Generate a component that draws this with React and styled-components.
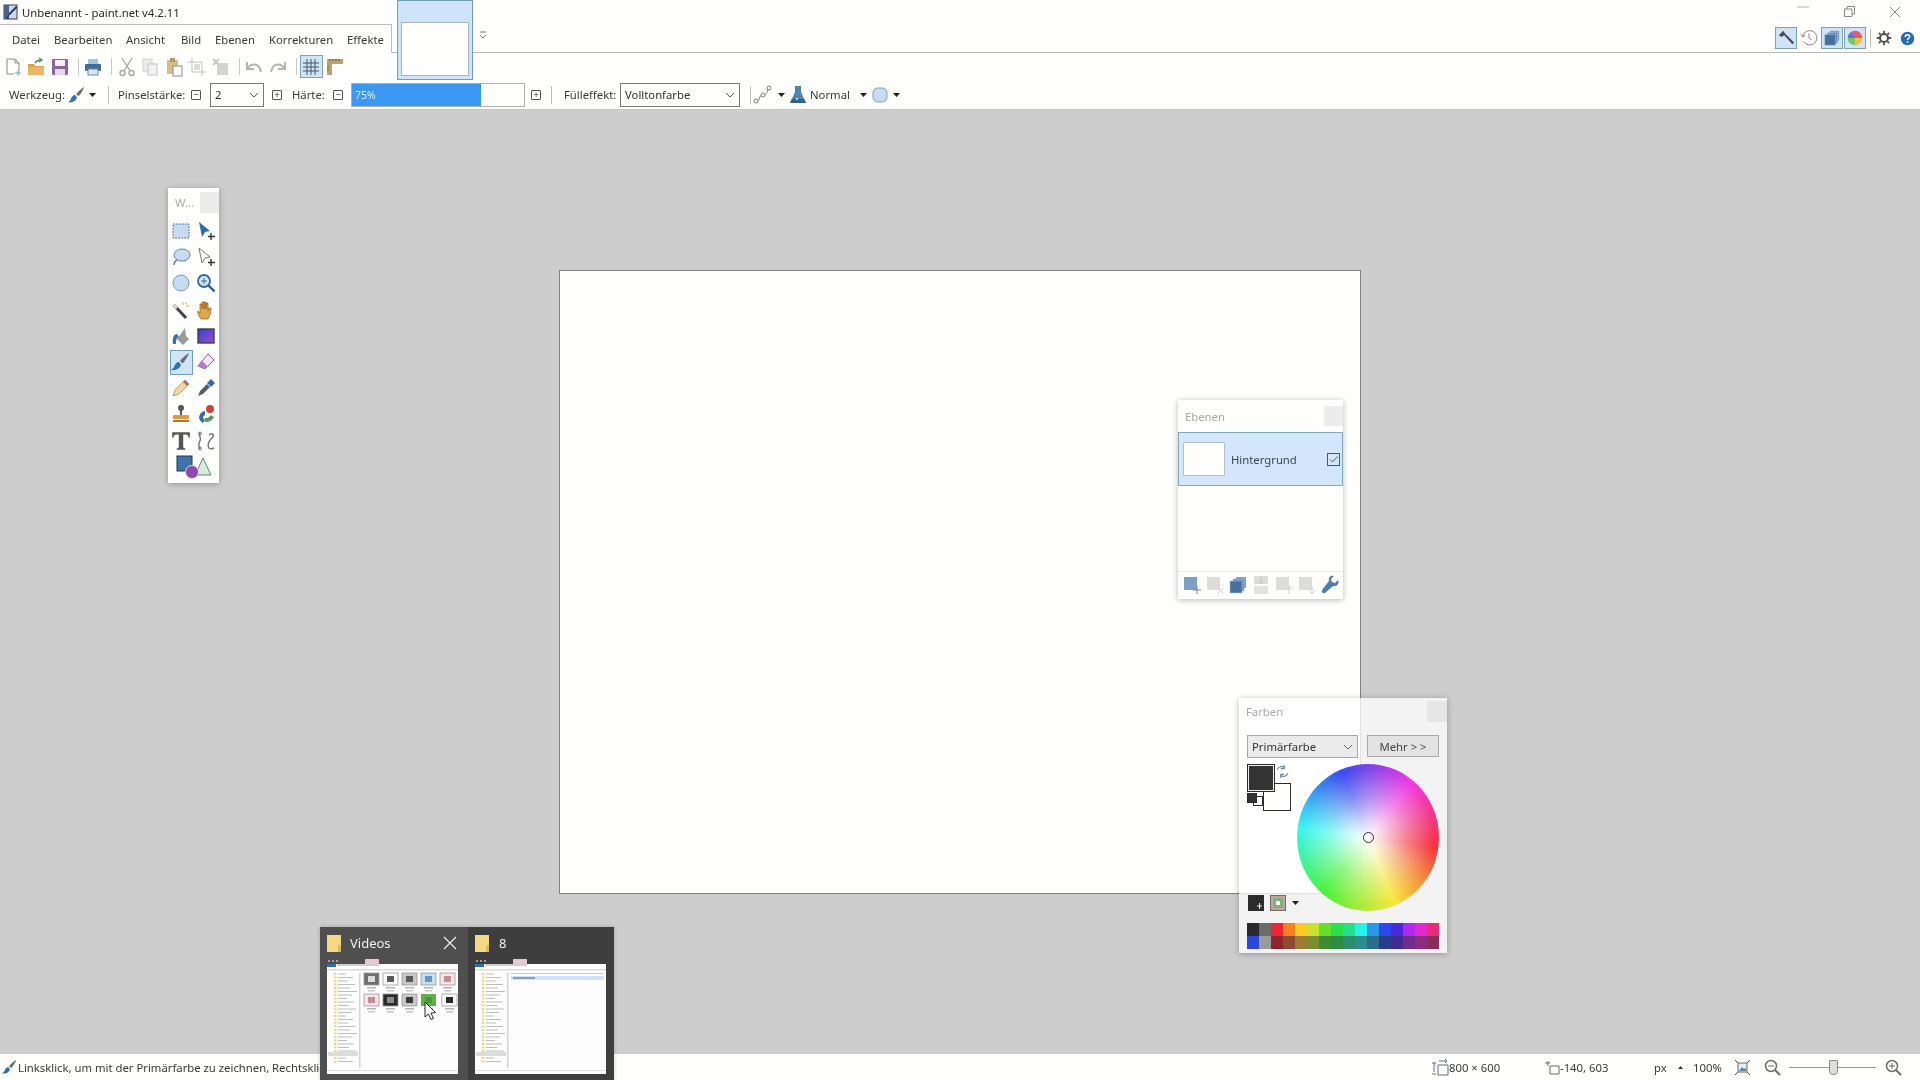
import React from "react";
import styled, { createGlobalStyle } from "styled-components";

const GlobalStyle = createGlobalStyle`
  html, body { margin: 0; padding: 0; background: #cdcdcd; }
  body { font-family: "Noto Sans", "Open Sans", sans-serif; font-size: 11.3px; color: #333; }
`;

const Screen = styled.div`
  position: relative;
  width: 1920px;
  height: 1080px;
  display: flex;
  flex-direction: column;
  overflow: hidden;
  filter: blur(0.35px);
`;

const Chrome = styled.header`
  position: relative;
  background: #fefefc;
  border-bottom: 1px solid #c4c4c4;
`;

const TitleBar = styled.div`
  height: 24px;
  display: flex;
  align-items: center;
  padding-left: 3px;
  gap: 3px;
  color: #2b2b2b;
`;

const WinButtons = styled.div`
  margin-left: auto;
  padding-right: 2px;
  display: flex;
  color: #9a9a9a;
`;

const WinButton = styled.span`
  width: 46px;
  display: flex;
  justify-content: center;
`;

const MenuRow = styled.div`
  height: 28px;
  display: flex;
  align-items: stretch;
  border-bottom: 1px solid #b9b9b6;
`;

const MenuTabs = styled.nav`
  width: 392px;
  box-sizing: border-box;
  margin-bottom: -1px;
  padding-left: 12px;
  display: flex;
  align-items: center;
  border-top: 1px solid #bdbdbd;
  border-right: 1px solid #bdbdbd;
  background: #fefefc;
`;

const MenuItem = styled.span`
  width: ${(p) => p.$w}px;
  color: #3a3a3a;
  white-space: nowrap;
`;

const Expander = styled.span`
  margin: 7px 0 0 86px;
`;

const RightTools = styled.div`
  margin-left: auto;
  margin-right: 2px;
  display: flex;
  align-items: center;
  gap: 1px;
`;

const PanelToggle = styled.span`
  width: 22px;
  height: 22px;
  display: flex;
  align-items: center;
  justify-content: center;
  box-sizing: border-box;
  border: 1px solid ${(p) => (p.$on ? "#7ba3b5" : "transparent")};
  background: ${(p) => (p.$on ? "#cfe4f7" : "transparent")};
`;

const DocThumb = styled.div`
  position: absolute;
  left: 397px;
  top: 0;
  width: 76px;
  height: 80px;
  box-sizing: border-box;
  padding: 21px 3px 3px;
  background: #cfe4fa;
  border: 1px solid #6f9fb0;
  z-index: 2;
`;

const DocThumbPage = styled.div`
  height: 100%;
  background: #fefefc;
  border: 1px solid #a9b4bf;
  box-sizing: border-box;
`;

const ToolRow = styled.div`
  height: 27px;
  display: flex;
  align-items: center;
  padding-left: 1px;
`;

const ToolButton = styled.span`
  width: 23.5px;
  height: 23px;
  flex-shrink: 0;
  display: flex;
  align-items: center;
  justify-content: center;
  box-sizing: border-box;
  border: 1px solid ${(p) => (p.$on ? "#7ba3b5" : "transparent")};
  background: ${(p) => (p.$on ? "#cfe4f7" : "transparent")};
`;

const ToolSep = styled.span`
  width: 1px;
  height: 17px;
  margin: 0 3px 0 6px;
  background: #c9c9c9;
  flex-shrink: 0;
`;

const OptionsRow = styled.div`
  height: 29px;
  display: flex;
  align-items: center;
  padding-left: 9px;
`;

const Opt = styled.span`
  display: flex;
  align-items: center;
  flex-shrink: 0;
  margin-left: ${(p) => p.$ml || 0}px;
  white-space: nowrap;
  color: #3a3a3a;
`;

const OptLabel = styled(Opt)`
  width: ${(p) => p.$w}px;
`;

const OptSep = styled.span`
  width: 1px;
  height: 18px;
  flex-shrink: 0;
  background: #bdbdbd;
  margin: 0 ${(p) => p.$mr || 0}px 0 ${(p) => p.$ml}px;
`;

const Step = styled.span`
  width: 10px;
  height: 10px;
  flex-shrink: 0;
  box-sizing: border-box;
  border: 1px solid #555;
  border-radius: 1px;
  margin-left: ${(p) => p.$ml}px;
  display: flex;
  align-items: center;
  justify-content: center;
  font-size: 9px;
  line-height: 1;
  color: #333;
`;

const Select = styled.span`
  width: ${(p) => p.$w}px;
  height: 24px;
  flex-shrink: 0;
  margin-left: ${(p) => p.$ml}px;
  box-sizing: border-box;
  border: 1px solid #7a7a7a;
  padding: 0 4px;
  display: flex;
  align-items: center;
  justify-content: space-between;
  color: #333;
`;

const Slider = styled.span`
  width: 174px;
  height: 24px;
  margin-left: 8px;
  flex-shrink: 0;
  box-sizing: border-box;
  border: 1px solid #b0b0b0;
  display: flex;
  background: #fefefc;
`;

const SliderFill = styled.span`
  background: #3a98f2;
  color: #dcefff;
  display: flex;
  align-items: center;
  padding-left: 3px;
  box-sizing: border-box;
  font-size: 10.5px;
`;

const Workspace = styled.main`
  flex: 1;
  min-height: 0;
  position: relative;
  display: flex;
  align-items: center;
  justify-content: center;
  background: #cdcdcd;
`;

const Canvas = styled.div`
  width: 802px;
  height: 624px;
  box-sizing: border-box;
  background: #fefefc;
  border: 1px solid #808080;
`;

const Floating = styled.section`
  position: absolute;
  left: ${(p) => p.$x}px;
  top: ${(p) => p.$y}px;
  width: ${(p) => p.$w}px;
  height: ${(p) => p.$h}px;
  box-sizing: border-box;
  background: ${(p) => p.$bg || "#fefefc"};
  box-shadow: 0 1px 6px rgba(0, 0, 0, 0.28);
  display: flex;
  flex-direction: column;
`;

const FloatHead = styled.div`
  height: ${(p) => p.$h}px;
  flex-shrink: 0;
  display: flex;
  align-items: center;
  justify-content: space-between;
  padding-left: 7px;
  color: #a9a9a9;
`;

const FloatClose = styled.span`
  width: ${(p) => p.$w}px;
  height: ${(p) => p.$hh}px;
  background: ${(p) => p.$bg || "#ececec"};
`;

const ToolGrid = styled.div`
  display: grid;
  grid-template-columns: 25px 25px;
  grid-auto-rows: 26.2px;
  justify-content: center;
  padding-top: 2px;
  justify-items: center;
  align-items: center;
`;

const ToolCell = styled.span`
  width: 23px;
  height: 25px;
  display: flex;
  align-items: center;
  justify-content: center;
  box-sizing: border-box;
  border: 1px solid ${(p) => (p.$on ? "#6f9fb0" : "transparent")};
  background: ${(p) => (p.$on ? "#cfe4f7" : "transparent")};
`;

const ShapesCell = styled.span`
  grid-column: 1 / span 2;
  display: flex;
  justify-content: center;
  margin-top: 1px;
`;

const LayerRow = styled.div`
  height: 54px;
  box-sizing: border-box;
  display: flex;
  align-items: center;
  padding: 0 2px 0 4px;
  background: #d3e6fb;
  border: 1px solid #84a9bd;
  color: #3d4650;
`;

const LayerThumb = styled.span`
  width: 42px;
  height: 34px;
  box-sizing: border-box;
  background: #fefefc;
  border: 1px solid #b5bfc9;
  border-radius: 1px;
  margin-right: 6px;
`;

const LayerCheck = styled.span`
  width: 13px;
  height: 13px;
  margin-left: auto;
  box-sizing: border-box;
  border: 1px solid #555;
  display: flex;
  align-items: center;
  justify-content: center;
`;

const LayerSpace = styled.div`
  flex: 1;
  border-bottom: 1px solid #ececec;
`;

const LayerTools = styled.div`
  height: 26px;
  display: flex;
  align-items: center;
  justify-content: space-between;
  padding: 0 3px 1px 4px;
`;

const ColorTop = styled.div`
  display: flex;
  justify-content: space-between;
  padding: 10px 8px 0 8px;
`;

const ColorSelect = styled(Select)`
  height: 23px;
  border-color: #a8a8a8;
  background: rgba(228, 228, 228, 0.75);
  padding: 0 4px;
`;

const MoreButton = styled.span`
  width: 72px;
  height: 22px;
  box-sizing: border-box;
  border: 1px solid #a8a8a8;
  background: #e3e3e3;
  display: flex;
  align-items: center;
  justify-content: center;
  color: #444;
`;

const ColorMain = styled.div`
  position: relative;
  height: 143px;
  margin-top: 6px;
`;

const Swatch = styled.span`
  position: absolute;
  left: ${(p) => p.$x}px;
  top: ${(p) => p.$y}px;
  width: ${(p) => p.$s}px;
  height: ${(p) => p.$s}px;
  box-sizing: border-box;
  background: ${(p) => p.$c};
  border: 1px solid #2d2d2d;
  box-shadow: ${(p) => (p.$ring ? "inset 0 0 0 1px #eee" : "none")};
`;

const SwapIcon = styled.span`
  position: absolute;
  left: 37px;
  top: 1px;
`;

const Wheel = styled.div`
  position: absolute;
  left: 58px;
  top: 0;
  width: 142px;
  height: 147px;
  border-radius: 50%;
  opacity: 0.92;
  background:
    radial-gradient(closest-side, #fff 0%, rgba(255, 255, 255, 0.8) 20%, rgba(255, 255, 255, 0.38) 55%, rgba(255, 255, 255, 0) 94%),
    conic-gradient(from 98deg, #f5222d, #f9e72c 60deg, #3ff02c 120deg, #2cf5f0 180deg, #2c3cf0 240deg, #f02ce0 300deg, #f5222d);
`;

const WheelMark = styled.span`
  position: absolute;
  left: 50%;
  top: 50%;
  width: 9px;
  height: 9px;
  margin: -6px 0 0 -5px;
  border-radius: 50%;
  border: 1px solid #222;
`;

const ColorTools = styled.div`
  display: flex;
  align-items: center;
  padding-left: 9px;
  gap: 6px;
  margin-top: -14px;
  height: 20px;
  position: relative;
`;

const Palette = styled.div`
  display: grid;
  grid-template-columns: repeat(16, 12px);
  grid-auto-rows: 13px;
  margin: 10px 0 0 8px;
`;

const PaletteCell = styled.span`
  background: ${(p) => p.$c};
`;

const StatusBar = styled.footer`
  height: 26px;
  flex-shrink: 0;
  display: flex;
  align-items: center;
  background: #fefefc;
  padding-left: 2px;
  color: #3a3a3a;
`;

const StatusText = styled.span`
  display: flex;
  align-items: center;
  white-space: nowrap;
  width: 1429px;
  overflow: hidden;
`;

const StatusCell = styled.span`
  width: ${(p) => p.$w}px;
  flex-shrink: 0;
  display: flex;
  align-items: center;
  white-space: nowrap;
`;

const ZoomTrack = styled.span`
  position: relative;
  width: 87px;
  height: 1px;
  background: #9a9a9a;
  flex-shrink: 0;
  margin: 0 9px 0 8px;
`;

const ZoomThumb = styled.span`
  position: absolute;
  left: 40px;
  top: -7px;
  width: 9px;
  height: 15px;
  box-sizing: border-box;
  border: 1px solid #8a8a8a;
  border-radius: 1px 1px 4px 4px;
  background: #dedede;
`;

const TaskPreview = styled.aside`
  position: absolute;
  left: 320px;
  top: 927px;
  width: 294px;
  height: 153px;
  display: flex;
  background: #3e3e3e;
  box-shadow: 0 0 4px rgba(0, 0, 0, 0.2);
  z-index: 3;
`;

const TaskItem = styled.div`
  width: ${(p) => p.$w}px;
  box-sizing: border-box;
  padding: 0 8px 0 ${(p) => p.$pad}px;
  background: ${(p) => p.$bg};
  display: flex;
  flex-direction: column;
`;

const TaskHead = styled.div`
  height: 32px;
  display: flex;
  align-items: center;
  gap: 9px;
  color: #f2f2f2;
  font-size: 13px;
`;

const TaskLabel = styled.span`
  margin-left: ${(p) => p.$ml}px;
`;

const TaskClose = styled.span`
  margin-left: auto;
  margin-right: 3px;
  display: flex;
`;

const Svg = ({ s = 20, w, h, vb = "0 0 20 20", children }) => (
  <svg width={w || s} height={h || s} viewBox={vb} fill="none" style={{ display: "block", flexShrink: 0 }}>
    {children}
  </svg>
);

const Caret = () => (
  <Svg w={7} h={4} vb="0 0 7 4"><path d="M0 0h7L3.5 4z" fill="#222" /></Svg>
);

const Chevron = ({ c = "#555" }) => (
  <Svg w={10} h={6} vb="0 0 10 6"><path d="M1 1l4 4 4-4" stroke={c} strokeWidth="1" /></Svg>
);

const AppIcon = () => (
  <Svg s={16} vb="0 0 16 16">
    <rect x="1" y="1" width="13" height="14" fill="#cdd8e8" stroke="#2f3f63" />
    <path d="M1 1h5v14H1z" fill="#4b628c" />
    <path d="M4 13l2-4 7-7 1.500 1.500-7 7z" fill="#2a3f63" />
    <path d="M3 15l3-1-1-2z" fill="#23314d" />
  </Svg>
);

const BrushIcon = ({ s = 20 }) => (
  <Svg s={s}>
    <path d="M18 1c-2 1-7 5-9 8l2.500 2.500C14 9 17 4 18 1z" fill="#6c6c6c" />
    <path d="M8 10c-3 0-4 3-5 5-.6 1.200-1.500 2-3 3 4 .6 8-.5 10-5z" fill="#2f6fb4" />
  </Svg>
);

const NewIcon = () => (
  <Svg><path d="M4 2h8l4 4v8M4 2v15h7" stroke="#8a8a8a" /><path d="M12 2v4h4" stroke="#8a8a8a" /><path d="M15 13v6M12 16h6" stroke="#7d9aa6" /></Svg>
);
const OpenIcon = () => (
  <Svg><path d="M2 7h6l1 2h9v9H2z" fill="#dfa04a" /><path d="M2 10h16v8H2z" fill="#e8b768" /><path d="M9 6c2-3 4-3 6-3M13 1l3 2-3 2" stroke="#4d9b62" strokeWidth="1.400" /></Svg>
);
const SaveIcon = () => (
  <Svg><rect x="2" y="2" width="16" height="16" rx="1" fill="#8b659f" /><rect x="5" y="3" width="10" height="6" fill="#f5eff8" /><rect x="5" y="12" width="10" height="6" fill="#e3d9ea" /></Svg>
);
const PrintIcon = () => (
  <Svg><rect x="5" y="2" width="10" height="6" fill="#a7c4db" /><rect x="2" y="7" width="16" height="7" rx="1" fill="#3f6d94" /><rect x="5" y="12" width="10" height="6" fill="#dce6ee" stroke="#6c8aa3" /></Svg>
);
const CutIcon = () => (
  <Svg><path d="M5 1l8 13M15 1L7 14" stroke="#a9a9a9" strokeWidth="1.400" /><circle cx="5.500" cy="16" r="2.500" stroke="#a9a9a9" strokeWidth="1.400" /><circle cx="14.500" cy="16" r="2.500" stroke="#a9a9a9" strokeWidth="1.400" /></Svg>
);
const CopyIcon = () => (
  <Svg><rect x="3" y="2" width="9" height="12" fill="#ececec" stroke="#cfcfcf" /><rect x="8" y="7" width="9" height="11" fill="#f2f2f2" stroke="#c4c4c4" /></Svg>
);
const PasteIcon = () => (
  <Svg><rect x="3" y="3" width="11" height="14" rx="1" fill="#dcbc82" /><rect x="6" y="1" width="5" height="4" fill="#b39a6c" /><rect x="9" y="9" width="9" height="10" fill="#fbfbfb" stroke="#8d8d8d" /></Svg>
);
const CropIcon = () => (
  <Svg><path d="M5 1v14h14M1 5h14v14" stroke="#c0c0c0" /><rect x="7" y="7" width="6" height="6" fill="#dcdcdc" /></Svg>
);
const DeselectIcon = () => (
  <Svg><rect x="6" y="6" width="11" height="12" fill="#d3d3d3" /><path d="M2 2l6 6M8 2L2 8" stroke="#bdbdbd" strokeWidth="1.600" /></Svg>
);
const UndoIcon = ({ flip }) => (
  <Svg>
    <g transform={flip ? "matrix(-1 0 0 1 20 0)" : undefined}>
      <path d="M3 5v7h7M3 12c4-6 12-7 14 3" stroke="#b4b4b4" strokeWidth="2" />
    </g>
  </Svg>
);
const GridIcon = () => (
  <Svg><path d="M6 2v16M10 2v16M14 2v16M2 6h16M2 10h16M2 14h16" stroke="#43566a" /></Svg>
);
const RulerIcon = () => (
  <Svg><path d="M2 2h16v5H7v11H2z" fill="#bfa26a" /><path d="M5 2v2M8 2v2M11 2v2M14 2v2M2 10h2M2 13h2" stroke="#6b5a39" /></Svg>
);
const CurveIcon = () => (
  <Svg><path d="M3 16c5 0 2-6 7-6s4-5 6-7" stroke="#7f7f7f" /><circle cx="3" cy="16" r="2" fill="#fff" stroke="#7f7f7f" /><circle cx="10" cy="10" r="2" fill="#fff" stroke="#7f7f7f" /><circle cx="16" cy="3" r="2" fill="#fff" stroke="#7f7f7f" /></Svg>
);
const FlaskIcon = () => (
  <Svg><path d="M7 1h6v6l5 11H2L7 7z" fill="#4f86ad" /><path d="M4 14h12l2 4H2z" fill="#2f6488" /><circle cx="9" cy="14" r="1" fill="#e9f3fa" /></Svg>
);
const ShapeIcon = () => (
  <Svg><rect x="3" y="3" width="14" height="14" rx="5" fill="#c8dcf7" stroke="#7e9dc2" /></Svg>
);
const HammerIcon = () => (
  <Svg s={18}><path d="M7 2l-5 5 3 2 3-2 9 10 2-2L9 5z" fill="#4d4d4d" /></Svg>
);
const ClockIcon = () => (
  <Svg s={18}><path d="M3 8a8 8 0 1 1 1 6" stroke="#7b7b7b" /><path d="M1 6l2 3 3-2M10 5v5l3 2" stroke="#7b7b7b" /></Svg>
);
const LayersIcon = ({ s = 20 }) => (
  <Svg s={s}><rect x="8" y="2" width="10" height="11" fill="#7da0cc" /><rect x="5" y="4" width="11" height="12" fill="#5f88bc" stroke="#a8c2e0" strokeWidth=".6" /><rect x="2" y="6" width="12" height="12" fill="#46719f" stroke="#a8c2e0" strokeWidth=".6" /></Svg>
);
const ColorsIcon = () => (
  <Svg s={18}>
    <circle cx="10" cy="10" r="8" style={{ fill: "#c65fa5" }} />
    <path d="M10 10V2a8 8 0 0 1 8 8z" fill="#ea5e58" />
    <path d="M10 10h8a8 8 0 0 1-8 8z" fill="#f0c344" />
    <path d="M10 10v8a8 8 0 0 1-8-8z" fill="#72c95f" />
    <path d="M10 10H2a8 8 0 0 1 3-6z" fill="#5e72d8" />
  </Svg>
);
const GearIcon = () => (
  <Svg s={16}><circle cx="10" cy="10" r="5" stroke="#4f4f4f" strokeWidth="2.600" /><path d="M10 1v3M10 16v3M1 10h3M16 10h3M3.600 3.600l2 2M14.400 14.400l2 2M3.600 16.400l2-2M14.400 5.600l2-2" stroke="#4f4f4f" strokeWidth="2.200" /></Svg>
);
const HelpIcon = () => (
  <Svg s={15}><circle cx="10" cy="10" r="9" fill="#2a6aa8" /><path d="M7 8c0-4 6-4 6-.6 0 2-3 2-3 4.600" stroke="#fff" strokeWidth="2" /><rect x="9" y="13.600" width="2" height="2" fill="#fff" /></Svg>
);

/* tool window icons */
const T = {
  rect: <Svg><rect x="2" y="3" width="16" height="14" fill="#c5dcf3" stroke="#607d99" strokeDasharray="2 1" /></Svg>,
  move: <Svg><path d="M3 1l11 9-5 1-3 5z" fill="#2f6cab" /><path d="M15 12v7M12 15.500h7" stroke="#333" strokeWidth="1.400" /></Svg>,
  lasso: <Svg><ellipse cx="11" cy="8" rx="8" ry="6" fill="#c5dcf3" stroke="#6488a8" /><path d="M6 13c-2 1-3 3-3 5" stroke="#6488a8" strokeWidth="1.500" /></Svg>,
  moveSel: <Svg><path d="M3 1l11 9-5 1-3 5z" fill="#fff" stroke="#777" /><path d="M15 12v7M12 15.500h7" stroke="#333" strokeWidth="1.400" /></Svg>,
  ellipse: <Svg><circle cx="10" cy="10" r="8" fill="#c5dcf3" stroke="#7f9ab3" /></Svg>,
  zoom: <Svg><circle cx="8" cy="8" r="6" fill="#d3e4f5" stroke="#35689a" strokeWidth="1.800" /><path d="M12.500 12.500l6 6" stroke="#2d5a88" strokeWidth="2.400" /><path d="M8 5v6M5 8h6" stroke="#35689a" /></Svg>,
  wand: <Svg><path d="M3 5l12 13" stroke="#444" strokeWidth="3" /><path d="M3 5l3 3" stroke="#ddd" strokeWidth="3" /><path d="M12 2v3M15 6h3M14 3l2 1" stroke="#d8b25a" /></Svg>,
  hand: <Svg><path d="M5 19c-2-3-4-6-3-8l2 2V4h2v5V2h2v7V2h2v7V3h2v8l1-3h2c0 4-1 8-3 11z" fill="#e0a94f" stroke="#8d5f1e" strokeWidth=".7" /></Svg>,
  fill: <Svg><path d="M9 9l5-7 1 8 3 3-6 6-6-6z" fill="#9a9a9a" /><path d="M6 8C3 8 1 12 2 18h3c0-3 0-6 3-7z" fill="#3b70a8" /></Svg>,
  gradient: <Svg><defs><linearGradient id="gr" x1="0" y1="0" x2="1" y2="1"><stop offset="0" stopColor="#2f46c8" /><stop offset="1" stopColor="#a04ad0" /></linearGradient></defs><rect x="2" y="3" width="16" height="14" fill="url(#gr)" stroke="#33383f" strokeWidth="1.300" /></Svg>,
  eraser: <Svg><path d="M12 2l6 6-9 9-7-3z" fill="#f1e9f5" stroke="#8e5aa6" /><path d="M5.500 8.500l6.500 6-3 2.500-7-3z" fill="#b37acb" /></Svg>,
  pencil: <Svg><path d="M2 18l2-6L14 2l4 4L8 16z" fill="#efd9a1" stroke="#a08a5a" strokeWidth=".7" /><path d="M14 2l4 4-2 2-4-4z" fill="#d5605a" /></Svg>,
  dropper: <Svg><path d="M2 18l2-5 7-7 3 3-7 7z" fill="#5a5f66" /><path d="M11 5l4-4 4 4-4 4z" fill="#2f6cab" /></Svg>,
  stamp: <Svg><circle cx="10" cy="4" r="3" fill="#555" /><rect x="9" y="6" width="2" height="5" fill="#555" /><rect x="2" y="11" width="16" height="4" rx="1" fill="#df9a45" /><rect x="2" y="16" width="16" height="2" fill="#b9702a" /></Svg>,
  recolor: <Svg><circle cx="14" cy="5" r="4" fill="#c8463f" /><path d="M3 14a7 7 0 0 1 6-7v4a3 3 0 0 0-2 3l2 2-2 3a8 8 0 0 1-4-5z" fill="#2f6cab" /><path d="M9 14c2 0 4 0 6-3l3 2c-2 4-5 5-9 5z" fill="#4f9a62" /></Svg>,
  text: <Svg s={22} vb="0 0 20 20"><path d="M2 2h16v5h-1c-.5-2-1-3-3-3h-2v12l2 1v1H6v-1l2-1V4H6C4 4 3.500 5 3 7H2z" fill="#555" /></Svg>,
  curves: <Svg><path d="M4 2c-2 3 2 5 0 8s-1 6 0 8M13 4c3-3 6 0 3 3-3 3-5 7-3 10 1 1 3 1 5 0" stroke="#6d7680" strokeWidth="1.400" /><circle cx="4" cy="2.500" r="1.400" stroke="#6d7680" /><circle cx="4" cy="17.500" r="1.400" stroke="#6d7680" /></Svg>,
};

const ShapesTool = () => (
  <Svg w={36} h={24} vb="0 0 36 24">
    <rect x="1" y="1" width="15" height="15" fill="#3d72ad" stroke="#24384f" />
    <path d="M27 3l8 17H19z" fill="#d8ead9" stroke="#5d8a72" />
    <circle cx="16" cy="17" r="6.500" fill="#8e48b0" stroke="#ddd" />
  </Svg>
);

const rowsOfTools = [
  ["rect", "move"], ["lasso", "moveSel"], ["ellipse", "zoom"], ["wand", "hand"], ["fill", "gradient"],
  ["brush", "eraser"], ["pencil", "dropper"], ["stamp", "recolor"], ["text", "curves"],
];

const Miniature = ({ cfg }) => (
  <svg width="131" height="115" viewBox="0 0 131 115" style={{ display: "block" }}>
    <rect x="0" y="5" width="131" height="110" fill="#fdfdfd" />
    <circle cx="2" cy="2" r="1" fill="#bdbdbd" />
    <circle cx="6" cy="2" r="1" fill="#bdbdbd" />
    <circle cx="10" cy="2" r="1" fill="#bdbdbd" />
    <rect x="0" y="5" width="9" height="3" fill="#2b6fb8" />
    <rect x="38" y="0" width="14" height="7" fill="#e9c7d2" />
    <rect x="10" y="5" width="40" height="2" fill="#cfcfcf" />
    <rect x="0" y="10" width="131" height="1.500" fill="#dcdcdc" />
    {Array.from({ length: 26 }).map((_, i) => (
      <g key={i}>
        <rect x="7" y={14 + i * 3.500} width="2.500" height="2" fill="#ecd88a" />
        <rect x="11" y={14.500 + i * 3.500} width={8 + (i * 7) % 12} height="1" fill="#bdbdbd" />
      </g>
    ))}
    <rect x="1" y="93" width="30" height="4" fill="#dcdcdc" />
    <rect x="32" y="14" width="1.500" height="95" fill="#d4d4d4" />
    <rect x="0" y="111" width="131" height="1" fill="#e0e0e0" />
    {cfg.map((c, i) => (
      <g key={i}>
        <rect x={c.x} y={c.y} width="15" height="12" fill={c.c} stroke={c.c === "#61b14a" ? "none" : "#9a9a9a"} strokeWidth=".8" />
        <rect x={c.x + 4} y={c.y + 3} width="7" height="6" fill={c.i} />
        <rect x={c.x + 3} y={c.y + 14} width="9" height="1.500" fill="#b5b5b5" />
        <rect x={c.x + 4} y={c.y + 17} width="7" height="1.500" fill="#c8c8c8" />
      </g>
    ))}
    {cfg.length > 0 && (
      <path d="M98 43v15l3.500-3 2.500 5.500 2.500-1-2.500-5.500 4.500-.5z" fill="#fff" stroke="#111" strokeWidth=".9" />
    )}
    {cfg.length === 0 && (
      <>
        <rect x="36" y="14" width="93" height="1" fill="#c8c8c8" />
        <rect x="36" y="17" width="93" height="4" fill="#cfe2f6" />
        <rect x="38" y="18" width="22" height="2" fill="#8a9fb5" />
      </>
    )}
  </svg>
);

const videoThumbs = [
  { x: 37, y: 14, c: "#6e6e6e", i: "#dcdcdc" }, { x: 56, y: 14, c: "#fdfdfd", i: "#5a5a5a" },
  { x: 75, y: 14, c: "#c8c8c8", i: "#5a5a5a" }, { x: 94, y: 14, c: "#c7dff2", i: "#6d93b8" },
  { x: 113, y: 14, c: "#f6e5e8", i: "#c98a98" }, { x: 37, y: 35, c: "#f6e5e8", i: "#c98a98" },
  { x: 56, y: 35, c: "#2b2b2b", i: "#8a8a8a" }, { x: 75, y: 35, c: "#c8c8c8", i: "#3b3b3b" },
  { x: 94, y: 35, c: "#61b14a", i: "#4b9a38" }, { x: 115, y: 35, c: "#fdfdfd", i: "#2b2b2b" },
];

const palette = [
  "#2a2a2e", "#6b6b6b", "#ee2433", "#f58220", "#fbcb25", "#c9e02c", "#62e02c", "#2ae04a",
  "#23e08f", "#27f2ef", "#2b97e8", "#2b48ef", "#4b28d8", "#b228ef", "#e428d0", "#ec2a78",
  "#2b48d8", "#9a9a9a", "#902430", "#8e4a30", "#9c7c30", "#7c8c30", "#3f8c30", "#2e8c40",
  "#2e8c6c", "#2e8c8c", "#2a6c8c", "#2a3c8c", "#402c8c", "#702c8c", "#8c2c80", "#8c2c58",
];

const menus = [
  ["Datei", 42], ["Bearbeiten", 72], ["Ansicht", 55], ["Bild", 34], ["Ebenen", 54], ["Korrekturen", 78], ["Effekte", 36],
];

const FolderIcon = () => (
  <Svg w={14} h={18} vb="0 0 14 18"><path d="M0 1h14v17H0z" fill="#f3d983" /><path d="M11 11h3v7h-3z" fill="#dcb95c" /></Svg>
);

export default function App() {
  return (
    <Screen>
      <GlobalStyle />
      <Chrome>
        <TitleBar>
          <AppIcon />
          <span>Unbenannt - paint.net v4.2.11</span>
          <WinButtons>
            <WinButton><Svg w={12} h={2} vb="0 0 12 2"><path d="M0 1h12" stroke="#b5b5b5" /></Svg></WinButton>
            <WinButton><Svg s={11} vb="0 0 11 11"><path d="M.5 3h7.500v7.500H.5zM3 3V.5h7.500V8H8" stroke="#888" /></Svg></WinButton>
            <WinButton><Svg s={12} vb="0 0 12 12"><path d="M1 1l10 10M11 1L1 11" stroke="#888" /></Svg></WinButton>
          </WinButtons>
        </TitleBar>
        <MenuRow>
          <MenuTabs>
            {menus.map(([m, w]) => <MenuItem key={m} $w={w}>{m}</MenuItem>)}
          </MenuTabs>
          <Expander>
            <Svg s={10} vb="0 0 10 10"><path d="M2 1h6M2 4l3 3 3-3" stroke="#777" /></Svg>
          </Expander>
          <RightTools>
            <PanelToggle $on><HammerIcon /></PanelToggle>
            <PanelToggle><ClockIcon /></PanelToggle>
            <PanelToggle $on><LayersIcon s={18} /></PanelToggle>
            <PanelToggle $on><ColorsIcon /></PanelToggle>
            <OptSep $ml={3} $mr={1} />
            <PanelToggle><GearIcon /></PanelToggle>
            <PanelToggle><HelpIcon /></PanelToggle>
          </RightTools>
        </MenuRow>
        <DocThumb><DocThumbPage /></DocThumb>
        <ToolRow>
          <ToolButton><NewIcon /></ToolButton>
          <ToolButton><OpenIcon /></ToolButton>
          <ToolButton><SaveIcon /></ToolButton>
          <ToolSep />
          <ToolButton><PrintIcon /></ToolButton>
          <ToolSep />
          <ToolButton><CutIcon /></ToolButton>
          <ToolButton><CopyIcon /></ToolButton>
          <ToolButton><PasteIcon /></ToolButton>
          <ToolButton><CropIcon /></ToolButton>
          <ToolButton><DeselectIcon /></ToolButton>
          <ToolSep />
          <ToolButton><UndoIcon /></ToolButton>
          <ToolButton><UndoIcon flip /></ToolButton>
          <ToolSep />
          <ToolButton $on><GridIcon /></ToolButton>
          <ToolButton><RulerIcon /></ToolButton>
        </ToolRow>
        <OptionsRow>
          <OptLabel $w={55}>Werkzeug:</OptLabel>
          <Opt $ml={4}><BrushIcon s={18} /></Opt>
          <Opt $ml={3}><Caret /></Opt>
          <OptSep $ml={12} />
          <OptLabel $ml={9} $w={68}>Pinselstärke:</OptLabel>
          <Step $ml={5}>−</Step>
          <Select $ml={9} $w={54}>2<Chevron /></Select>
          <Step $ml={8}>+</Step>
          <OptLabel $ml={10} $w={34}>Härte:</OptLabel>
          <Step $ml={7}>−</Step>
          <Slider><SliderFill style={{ width: "75%" }}>75%</SliderFill></Slider>
          <Step $ml={6}>+</Step>
          <OptSep $ml={10} />
          <OptLabel $ml={12} $w={54}>Fülleffekt:</OptLabel>
          <Select $ml={2} $w={120}>Volltonfarbe<Chevron /></Select>
          <OptSep $ml={10} />
          <Opt $ml={2}><CurveIcon /></Opt>
          <Opt $ml={5}><Caret /></Opt>
          <Opt $ml={3}><FlaskIcon /></Opt>
          <OptLabel $ml={2} $w={44}>Normal</OptLabel>
          <Opt $ml={6}><Caret /></Opt>
          <Opt $ml={3}><ShapeIcon /></Opt>
          <Opt $ml={3}><Caret /></Opt>
        </OptionsRow>
      </Chrome>

      <Workspace>
        <Canvas />
        <Floating $x={168} $y={78} $w={51} $h={295}>
          <FloatHead $h={28}>
            <span>W...</span>
            <FloatClose $w={19} $hh={21} />
          </FloatHead>
          <ToolGrid>
            {rowsOfTools.flat().map((k) => (
              <ToolCell key={k} $on={k === "brush"}>
                {k === "brush" ? <BrushIcon /> : T[k]}
              </ToolCell>
            ))}
            <ShapesCell><ShapesTool /></ShapesCell>
          </ToolGrid>
        </Floating>

        <Floating $x={1178} $y={290} $w={165} $h={199}>
          <FloatHead $h={32}>
            <span>Ebenen</span>
            <FloatClose $w={19} $hh={20} />
          </FloatHead>
          <LayerRow>
            <LayerThumb />
            Hintergrund
            <LayerCheck>
              <Svg s={11} vb="0 0 11 11"><path d="M2 5.500l2.500 2.500L9.500 2.500" stroke="#555" /></Svg>
            </LayerCheck>
          </LayerRow>
          <LayerSpace />
          <LayerTools>
            <Svg><rect x="2" y="2" width="13" height="13" fill="#7f9fc4" /><path d="M15 11v8M11 15h8" stroke="#7c8a96" /></Svg>
            <Svg><rect x="2" y="2" width="13" height="13" fill="#dcdcdc" /><path d="M13 13l5 5M18 13l-5 5" stroke="#cfcfcf" /></Svg>
            <LayersIcon />
            <Svg><rect x="3" y="1" width="14" height="8" fill="#dcdcdc" /><rect x="3" y="11" width="14" height="8" fill="#e3e3e3" /><path d="M10 1v8M7 6l3 3 3-3" stroke="#c4c4c4" /></Svg>
            <Svg><rect x="2" y="2" width="13" height="13" fill="#dcdcdc" /><path d="M15 19v-8M12 14l3-3 3 3" stroke="#cfcfcf" /></Svg>
            <Svg><rect x="2" y="2" width="13" height="13" fill="#dcdcdc" /><path d="M15 11v8M12 16l3 3 3-3" stroke="#cfcfcf" /></Svg>
            <Svg><path d="M18 5l-3 3-3-1-1-3 3-3c-3-1-6 1-5 5L2 15c-1 2 1 4 3 3l8-7c3 1 7-2 5-6z" fill="#4f7eae" /></Svg>
          </LayerTools>
        </Floating>

        <Floating $x={1239} $y={588} $w={208} $h={255} $bg="rgba(255, 255, 255, 0.76)">
          <FloatHead $h={27}>
            <span>Farben</span>
            <FloatClose $w={20} $hh={21} $bg="rgba(226, 226, 226, 0.8)" />
          </FloatHead>
          <ColorTop>
            <ColorSelect $ml={0} $w={111}>Primärfarbe<Chevron c="#666" /></ColorSelect>
            <MoreButton>Mehr &gt; &gt;</MoreButton>
          </ColorTop>
          <ColorMain>
            <Swatch $x={24} $y={19} $s={28} $c="#fefefc" />
            <Swatch $x={8} $y={0} $s={28} $c="#333333" $ring />
            <Swatch $x={14} $y={32} $s={10} $c="#fefefc" />
            <Swatch $x={8} $y={29} $s={10} $c="#333333" />
            <SwapIcon><Svg s={13} vb="0 0 11 11"><path d="M1 4c1-3 4-3 6-2M7 0v3H4M10 7c-1 3-4 3-6 2M4 11V8h3" stroke="#6d88a3" /></Svg></SwapIcon>
            <Wheel><WheelMark /></Wheel>
          </ColorMain>
          <ColorTools>
            <Svg s={16} vb="0 0 16 16"><rect width="16" height="16" fill="#2b2b2b" /><path d="M9 11h5M11.500 8v6" stroke="#eee" /></Svg>
            <Svg s={16} vb="0 0 16 16"><rect x=".5" y=".5" width="15" height="15" fill="#c9a39a" stroke="#6d6d6d" /><rect x="3" y="3" width="10" height="10" fill="#7fb37e" /><rect x="6" y="6" width="4" height="4" fill="#fff" /></Svg>
            <Caret />
          </ColorTools>
          <Palette>
            {palette.map((c, i) => <PaletteCell key={i} $c={c} />)}
          </Palette>
        </Floating>
      </Workspace>

      <StatusBar>
        <StatusText>
          <BrushIcon s={16} />
          Linksklick, um mit der Primärfarbe zu zeichnen, Rechtsklick
        </StatusText>
        <StatusCell $w={114}>
          <Svg s={18} vb="0 0 18 18"><path d="M7 7h10v10H7zM1 5h4M3 5v9M1 16h4M8 3h8M14 1l2 2-2 2" stroke="#5f6f7d" /></Svg>
          800 × 600
        </StatusCell>
        <StatusCell $w={109}>
          <Svg s={15} vb="0 0 15 15"><path d="M5 6h9v8H5zM3 1v5M0 3h5" stroke="#6b6b6b" /></Svg>
          -140, 603
        </StatusCell>
        <StatusCell $w={24}>px</StatusCell>
        <StatusCell $w={15}><Svg w={5} h={3} vb="0 0 5 3"><path d="M0 3h5L2.500 0z" fill="#333" /></Svg></StatusCell>
        <StatusCell $w={41}>100%</StatusCell>
        <StatusCell $w={30}>
          <Svg s={17} vb="0 0 17 17"><path d="M1 1l3 3M16 1l-3 3M1 16l3-3M16 16l-3-3" stroke="#444" /><rect x="4" y="4" width="9" height="9" fill="#e4edf5" stroke="#6d6d6d" /><path d="M5 12l3-4 2 2 2-1v3z" fill="#5d83ad" /></Svg>
        </StatusCell>
        <StatusCell $w={17}>
          <Svg s={17} vb="0 0 17 17"><circle cx="7" cy="7" r="5.500" stroke="#6d6d6d" strokeWidth="1.500" /><path d="M11 11l5 5" stroke="#6d6d6d" strokeWidth="2" /><path d="M4 7h6" stroke="#6d6d6d" /></Svg>
        </StatusCell>
        <ZoomTrack><ZoomThumb /></ZoomTrack>
        <StatusCell $w={17}>
          <Svg s={17} vb="0 0 17 17"><circle cx="7" cy="7" r="5.500" stroke="#6d6d6d" strokeWidth="1.500" /><path d="M11 11l5 5" stroke="#6d6d6d" strokeWidth="2" /><path d="M4 7h6M7 4v6" stroke="#6d6d6d" /></Svg>
        </StatusCell>
      </StatusBar>

      <TaskPreview>
        <TaskItem $w={148} $pad={7} $bg="#4f4f4f">
          <TaskHead>
            <FolderIcon />
            <TaskLabel $ml={0}>Videos</TaskLabel>
            <TaskClose>
              <Svg s={14} vb="0 0 14 14"><path d="M1 1l12 12M13 1L1 13" stroke="#eee" strokeWidth="1.200" /></Svg>
            </TaskClose>
          </TaskHead>
          <Miniature cfg={videoThumbs} />
        </TaskItem>
        <TaskItem $w={146} $pad={7} $bg="#3e3e3e">
          <TaskHead>
            <FolderIcon />
            <TaskLabel $ml={1}>8</TaskLabel>
          </TaskHead>
          <Miniature cfg={[]} />
        </TaskItem>
      </TaskPreview>
    </Screen>
  );
}
